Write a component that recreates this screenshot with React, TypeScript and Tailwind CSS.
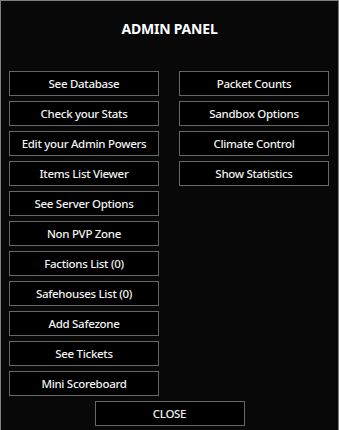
const leftButtons = [
  "See Database",
  "Check your Stats",
  "Edit your Admin Powers",
  "Items List Viewer",
  "See Server Options",
  "Non PVP Zone",
  "Factions List (0)",
  "Safehouses List (0)",
  "Add Safezone",
  "See Tickets",
  "Mini Scoreboard",
];

const rightButtons = [
  "Packet Counts",
  "Sandbox Options",
  "Climate Control",
  "Show Statistics",
];

function PanelButton({ label }: { label: string }) {
  return (
    <button className="h-[25px] w-[150px] border border-[#666666] bg-black text-[11.5px] font-medium leading-none text-[#f2f2f2] flex items-center justify-center tracking-[-0.3px]">
      {label}
    </button>
  );
}

export default function App() {
  return (
    <div
      className="w-[339px] h-[430px] overflow-hidden bg-[#080808] border-t border-x border-[#7f7f7f] flex flex-col"
      style={{ fontFamily: '"Noto Sans", "Open Sans", sans-serif' }}
    >
      <h1 className="mt-[18px] h-[20px] text-center text-[14px] font-bold leading-[20px] text-white tracking-[-0.2px]">
        ADMIN PANEL
      </h1>

      <div className="mt-[32px] ml-[8px] grid grid-cols-[150px_150px] gap-x-[20px] items-start">
        <div className="flex flex-col gap-[5px]">
          {leftButtons.map((b) => (
            <PanelButton key={b} label={b} />
          ))}
        </div>
        <div className="flex flex-col gap-[5px]">
          {rightButtons.map((b) => (
            <PanelButton key={b} label={b} />
          ))}
        </div>
      </div>

      <div className="mt-[5px] flex justify-center">
        <PanelButton label="CLOSE" />
      </div>
    </div>
  );
}
